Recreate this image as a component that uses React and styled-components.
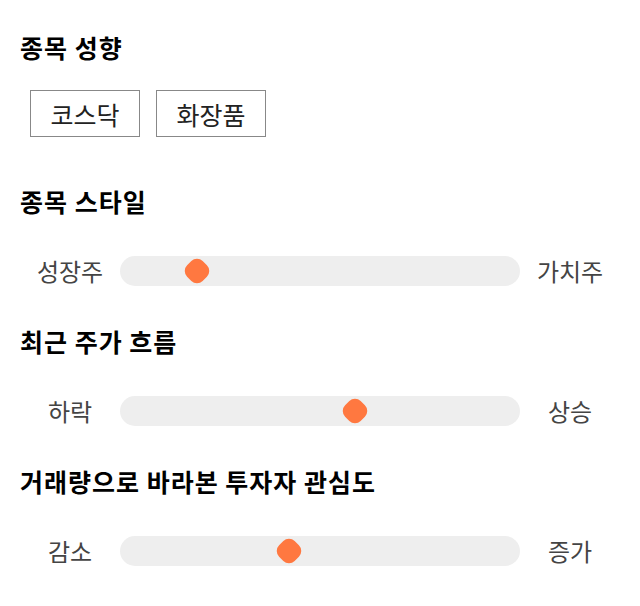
import React from 'react';
import styled, {createGlobalStyle} from 'styled-components';

const GlobalStyle = createGlobalStyle`
  body {
    margin: 0;
    background: #fff;
    font-family: "Noto Sans CJK KR", "Noto Sans", sans-serif;
  }
`;

const sliders = [
  {title: '종목 스타일', left: '성장주', right: '가치주', value: 19.25},
  {title: '최근 주가 흐름', left: '하락', right: '상승', value: 58.75},
  {title: '거래량으로 바라본 투자자 관심도', left: '감소', right: '증가', value: 42.25},
];

const App = () => {
  return (
    <Page>
      <GlobalStyle />
      <Section $gap={28} $after={49}>
        <Title>종목 성향</Title>
        <ChipRow>
          <Chip>코스닥</Chip>
          <Chip>화장품</Chip>
        </ChipRow>
      </Section>
      {sliders.map((s) => (
        <Section key={s.title} $gap={40} $after={40}>
          <Title>{s.title}</Title>
          <SliderRow>
            <EndLabel>{s.left}</EndLabel>
            <Track>
              <Thumb style={{left: `calc(${s.value}% - 15px)`}} />
            </Track>
            <EndLabel>{s.right}</EndLabel>
          </SliderRow>
        </Section>
      ))}
    </Page>
  );
};

const Page = styled.div`
  width: 600px;
  padding: 32px 20px 0;
  display: flex;
  flex-direction: column;
`;

const Section = styled.section`
  display: flex;
  flex-direction: column;
  gap: ${(p) => p.$gap}px;
  margin-bottom: ${(p) => p.$after}px;
`;

const Title = styled.h2`
  margin: 0;
  font-size: 25px;
  letter-spacing: 1px;
  line-height: 30px;
  font-weight: 700;
  color: #000;
  white-space: nowrap;
`;

const ChipRow = styled.div`
  display: flex;
  gap: 16px;
  padding-left: 10px;
`;

const Chip = styled.button`
  width: 110px;
  height: 47px;
  padding: 0;
  background: #fff;
  border: 1px solid #888;
  border-radius: 0;
  font-family: inherit;
  font-size: 25px;
  color: #222;
`;

const SliderRow = styled.div`
  display: grid;
  grid-template-columns: 100px 400px 100px;
  align-items: center;
`;

const EndLabel = styled.span`
  text-align: center;
  font-size: 24px;
  line-height: 30px;
  color: #444;
`;

const Track = styled.div`
  position: relative;
  height: 30px;
  border-radius: 15px;
  background: #eee;
`;

const Thumb = styled.div`
  position: absolute;
  top: 0;
  width: 30px;
  height: 30px;
  &::before {
    content: '';
    position: absolute;
    left: 4px;
    top: 4px;
    width: 22px;
    height: 22px;
    border-radius: 8px;
    background: #ff7840;
    transform: rotate(45deg);
  }
`;

export default App;
